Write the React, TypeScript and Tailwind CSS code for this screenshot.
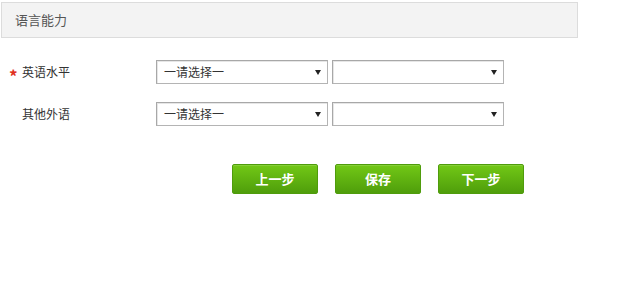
import React from "react";

function Select({ text, width }: { text?: string; width: string }) {
  return (
    <div
      className={`${width} h-[24px] border border-[#b4b4b4] border-t-[#a8a8a8] border-l-[#a8a8a8] bg-white shadow-[inset_1px_1px_0_#e6e6e6] flex items-center justify-between pl-[7px] pr-[6px] text-[12px] text-[#333]`}
    >
      <span className="leading-none">{text ?? ""}</span>
      <span className="w-0 h-0 border-l-[3px] border-r-[3px] border-t-[5px] border-l-transparent border-r-transparent border-t-[#222]" />
    </div>
  );
}

function Row({ label, required }: { label: string; required?: boolean }) {
  return (
    <div className="flex items-center h-[24px]">
      <div className="w-[156px] flex items-center">
        <span className="w-[22px] pl-[9px] flex items-center">
          {required ? (
            <span className="text-[#e0301e] text-[17px] font-bold leading-none mt-[6px]">*</span>
          ) : null}
        </span>
        <span className="text-[12px] text-[#333] leading-none">{label}</span>
      </div>
      <Select text="一请选择一" width="w-[172px]" />
      <div className="ml-[4px]">
        <Select width="w-[172px]" />
      </div>
    </div>
  );
}

function GreenButton({ label }: { label: string }) {
  return (
    <button className="w-[86px] h-[30px] rounded-[2px] border border-[#4f9c0c] bg-gradient-to-b from-[#72c816] to-[#4f9e0b] text-white text-[13px] font-bold flex items-center justify-center shadow-[inset_0_1px_0_rgba(255,255,255,0.15)]">
      {label}
    </button>
  );
}

export default function App() {
  return (
    <div
      className="w-[640px] h-[300px] bg-white overflow-hidden"
      style={{ fontFamily: '"Noto Sans CJK SC", "Liberation Sans", sans-serif' }}
    >
      <div className="pt-[2px] pl-[1px]">
        <div className="w-[577px] h-[36px] border border-[#dcdcdc] bg-[#f3f3f3] flex items-center pl-[13px] text-[13px] text-[#555]">
          语言能力
        </div>
      </div>
      <div className="mt-[22px]">
        <Row label="英语水平" required />
        <div className="mt-[18px]">
          <Row label="其他外语" />
        </div>
      </div>
      <div className="mt-[38px] flex pl-[232px] gap-[17px]">
        <GreenButton label="上一步" />
        <GreenButton label="保存" />
        <GreenButton label="下一步" />
      </div>
    </div>
  );
}
